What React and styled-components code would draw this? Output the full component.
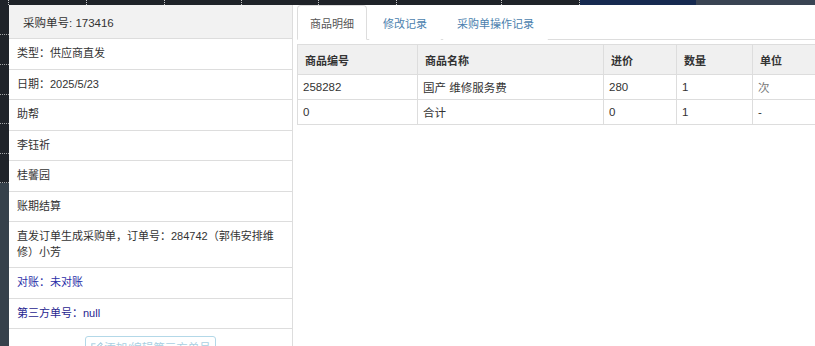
import React from "react";
import styled, { createGlobalStyle } from "styled-components";

const GlobalStyle = createGlobalStyle`
  html, body {
    margin: 0;
    padding: 0;
    background: #fff;
  }
  body {
    font-family: "Liberation Sans", "Noto Sans CJK SC", sans-serif;
    font-size: 11px;
    color: #333;
  }
`;

const Page = styled.div`
  width: 815px;
  height: 346px;
  overflow: hidden;
  display: flex;
  flex-direction: column;
`;

const TopStrip = styled.div`
  height: 5px;
  display: flex;
  background: #1f2329;
  flex-shrink: 0;
`;

const TopSeg = styled.div`
  width: ${(p) => p.w}px;
  flex-shrink: 0;
  background: ${(p) => p.bg || "#1f2329"};
  border-right: ${(p) => (p.dot ? "1px dotted rgba(255,255,255,0.75)" : "none")};
  box-sizing: border-box;
`;

const Body = styled.div`
  flex: 1;
  display: flex;
  min-height: 0;
`;

const Sidebar = styled.div`
  width: 9px;
  flex-shrink: 0;
  display: flex;
  flex-direction: column;
  background: #36414b;
`;

const SideSeg = styled.div`
  height: ${(p) => p.h}px;
  flex-shrink: 0;
  background: #1f2329;
  border-bottom: 1px dotted rgba(255, 255, 255, 0.6);
  box-sizing: border-box;
`;

const LeftPanel = styled.div`
  width: 283px;
  flex-shrink: 0;
  border-right: 1px solid #ddd;
  display: flex;
  flex-direction: column;
`;

const PanelHead = styled.div`
  height: 34px;
  flex-shrink: 0;
  box-sizing: border-box;
  background: #f2f2f2;
  border-bottom: 1px solid #ddd;
  padding: 0 14px;
  display: flex;
  align-items: center;
  font-size: 11.5px;
`;

const InfoRow = styled.div`
  flex-shrink: 0;
  padding: 7px 8px;
  line-height: 15.5px;
  border-bottom: 1px solid #ddd;
  color: ${(p) => p.color || "#333"};
`;

const ButtonRow = styled.div`
  flex-shrink: 0;
  display: flex;
  justify-content: center;
  padding-top: 7px;
`;

const GhostButton = styled.button`
  display: flex;
  align-items: center;
  gap: 1px;
  height: 22px;
  padding: 0 4px;
  border: 1px solid #b3d8e8;
  border-radius: 3px;
  background: #fff;
  color: #a9d0e2;
  font-family: inherit;
  font-size: 11.5px;
`;

const RightPanel = styled.div`
  flex: 1;
  min-width: 0;
  padding-left: 4px;
`;

const TabBar = styled.div`
  height: 34px;
  display: flex;
  border-bottom: 1px solid #ddd;
`;

const Tab = styled.div`
  height: 35px;
  box-sizing: border-box;
  display: flex;
  align-items: center;
  padding: 0 ${(p) => (p.$active ? "12px" : "13px")};
  margin-right: 2px;
  background: #fff;
  border: 1px solid ${(p) => (p.$active ? "#ddd" : "#fff")};
  border-bottom-color: #fff;
  border-radius: 4px 4px 0 0;
  color: ${(p) => (p.$active ? "#555" : "#4b7fae")};
`;

const Table = styled.table`
  border-collapse: collapse;
  margin-top: 4px;
  width: 535px;
  table-layout: fixed;
`;

const Th = styled.th`
  width: ${(p) => p.w}px;
  height: 30px;
  box-sizing: border-box;
  padding: 0 7px;
  text-align: left;
  font-weight: bold;
  background: #f0f0f0;
  border: 1px solid #ddd;
  color: #333;
`;

const Td = styled.td`
  height: 25px;
  box-sizing: border-box;
  padding: 0 5px;
  border: 1px solid #ddd;
  font-size: 11.5px;
  color: ${(p) => (p.$muted ? "#777" : "#333")};
`;

const EditIcon = () => (
  <svg width="13" height="13" viewBox="0 0 14 14" fill="none" stroke="currentColor" strokeWidth="1.2">
    <path d="M11 8v4H2V3h4" />
    <path d="M6 9l0.4-2L11.5 2l1.6 1.6L8 8.6z" />
  </svg>
);

const topSegs = [
  { w: 9, dot: true },
  { w: 78, dot: true },
  { w: 78, dot: true },
  { w: 77, dot: true },
  { w: 77, dot: true },
  { w: 78, dot: true },
  { w: 105, dot: true },
  { w: 78, dot: true },
  { w: 116, bg: "#162a50" },
  { w: 119, bg: "#3a4453" },
];

const rows = [
  { text: "类型：供应商直发" },
  { text: "日期：2025/5/23" },
  { text: "助帮" },
  { text: "李钰祈" },
  { text: "桂馨园" },
  { text: "账期结算" },
  { text: "直发订单生成采购单，订单号：284742（郭伟安排维修）小芳" },
  { text: "对账：未对账", color: "#2b2fa8" },
  { text: "第三方单号：null", color: "#1f2590" },
];

const columns = [
  { label: "商品编号", w: 120 },
  { label: "商品名称", w: 186 },
  { label: "进价", w: 73 },
  { label: "数量", w: 76 },
  { label: "单位", w: 80 },
];

const items = [
  ["258282", "国产 维修服务费", "280", "1", "次"],
  ["0", "合计", "0", "1", "-"],
];

export default function App() {
  return (
    <Page>
      <GlobalStyle />
      <TopStrip>
        {topSegs.map((s, i) => (
          <TopSeg key={i} w={s.w} bg={s.bg} dot={s.dot} />
        ))}
      </TopStrip>
      <Body>
        <Sidebar>
          <SideSeg h={30} />
          <SideSeg h={30} />
          <SideSeg h={30} />
          <SideSeg h={29} />
          <SideSeg h={30} />
          <SideSeg h={29} />
        </Sidebar>
        <LeftPanel>
          <PanelHead>采购单号: 173416</PanelHead>
          {rows.map((r, i) => (
            <InfoRow key={i} color={r.color}>
              {r.text}
            </InfoRow>
          ))}
          <ButtonRow>
            <GhostButton>
              <EditIcon />
              添加/编辑第三方单号
            </GhostButton>
          </ButtonRow>
        </LeftPanel>
        <RightPanel>
          <TabBar>
            <Tab $active>商品明细</Tab>
            <Tab>修改记录</Tab>
            <Tab>采购单操作记录</Tab>
          </TabBar>
          <Table>
            <thead>
              <tr>
                {columns.map((c) => (
                  <Th key={c.label} w={c.w}>
                    {c.label}
                  </Th>
                ))}
              </tr>
            </thead>
            <tbody>
              {items.map((row, i) => (
                <tr key={i}>
                  {row.map((cell, j) => (
                    <Td key={j} $muted={j === 4 && cell === "次"}>
                      {cell}
                    </Td>
                  ))}
                </tr>
              ))}
            </tbody>
          </Table>
        </RightPanel>
      </Body>
    </Page>
  );
}
